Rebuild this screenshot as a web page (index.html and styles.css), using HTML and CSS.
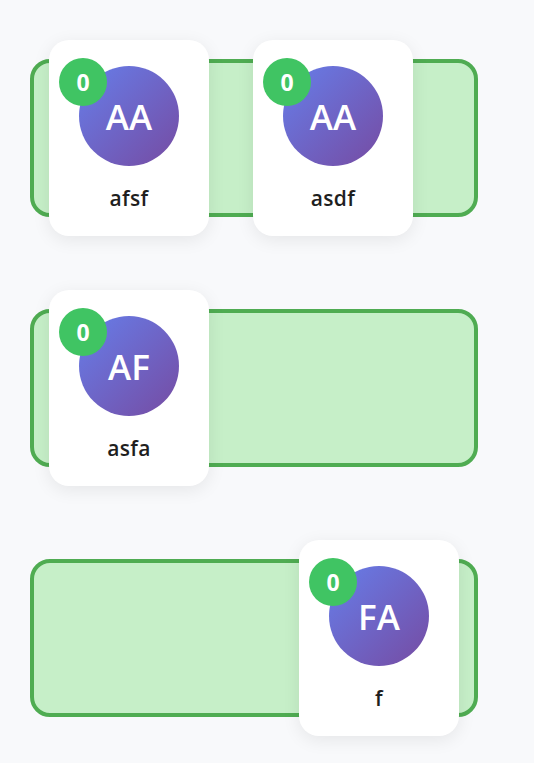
FILE: index.html
```html
<!DOCTYPE html>
<html>
<head>
<meta charset="utf-8">
<link rel="stylesheet" href="styles.css">
</head>
<body>
<div class="board">
  <div class="lane">
    <div class="card">
      <div class="badge">0</div>
      <div class="avatar">AA</div>
      <div class="name">afsf</div>
    </div>
    <div class="card">
      <div class="badge">0</div>
      <div class="avatar">AA</div>
      <div class="name">asdf</div>
    </div>
  </div>
  <div class="lane">
    <div class="card">
      <div class="badge">0</div>
      <div class="avatar">AF</div>
      <div class="name">asfa</div>
    </div>
  </div>
  <div class="lane lane-end">
    <div class="card">
      <div class="badge">0</div>
      <div class="avatar">FA</div>
      <div class="name">f</div>
    </div>
  </div>
</div>
</body>
</html>
```
FILE: styles.css
```css
html, body {
  margin: 0;
  padding: 0;
  background: #f8f9fb;
  font-family: "Open Sans", "Noto Sans", sans-serif;
}
.board {
  display: flex;
  flex-direction: column;
  gap: 92px;
  padding: 59px 0 46px 30px;
}
.lane {
  box-sizing: border-box;
  width: 448px;
  height: 158px;
  border: 4px solid #4fac52;
  border-radius: 20px;
  background: #c6efc8;
  display: flex;
  align-items: center;
  gap: 44px;
  padding: 0 15px;
}
.lane-end {
  justify-content: flex-end;
}
.card {
  position: relative;
  box-sizing: border-box;
  flex-shrink: 0;
  width: 160px;
  height: 196px;
  background: #ffffff;
  border-radius: 20px;
  box-shadow: 0 4px 18px rgba(0, 0, 0, 0.08);
  display: flex;
  flex-direction: column;
  align-items: center;
  padding-top: 26px;
}
.avatar {
  width: 100px;
  height: 100px;
  border-radius: 50%;
  background: linear-gradient(135deg, #667eea 0%, #764ba2 100%);
  color: #ffffff;
  font-size: 35px;
  font-weight: 600;
  display: flex;
  align-items: center;
  justify-content: center;
}
.badge {
  position: absolute;
  left: 10px;
  top: 18px;
  width: 48px;
  height: 48px;
  border-radius: 50%;
  background: #40c463;
  color: #ffffff;
  font-size: 23px;
  font-weight: 700;
  display: flex;
  align-items: center;
  justify-content: center;
}
.name {
  margin-top: 18px;
  font-size: 21px;
  line-height: 28px;
  font-weight: 600;
  letter-spacing: 0.3px;
  color: #1f1f1f;
}
```
